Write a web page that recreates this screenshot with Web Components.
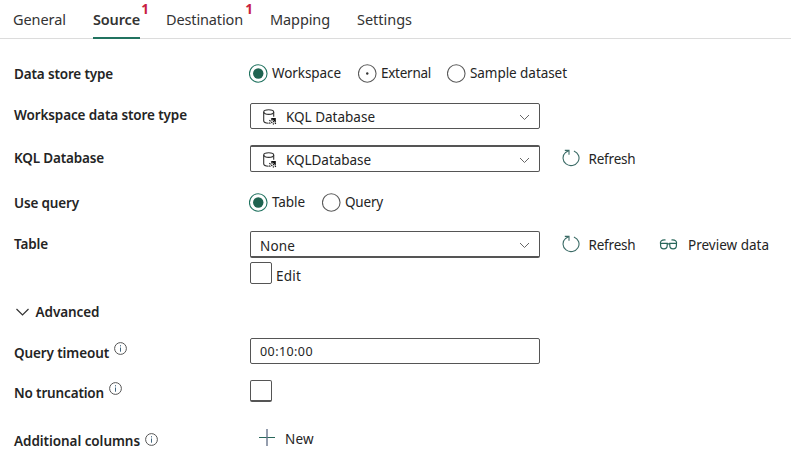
<!DOCTYPE html>
<html lang="en">
<head>
<meta charset="utf-8">
<title>Copy data – Source</title>
<style>
html,body{margin:0;background:#fff}
body{width:791px;height:456px;overflow:hidden;font:14px/20px "Noto Sans","Open Sans",sans-serif;color:#242424}
form-row.last{padding-top:6px;box-sizing:border-box}
.stack{display:grid;gap:4px}
.line{display:flex;align-items:center}
</style>
</head>
<body>
<tab-bar>
  <tab-item w="53" style="width:54px">General</tab-item>
  <tab-item w="47" selected badge="1" style="width:47px">Source</tab-item>
  <tab-item w="77" badge="1" style="width:78px">Destination</tab-item>
  <tab-item w="60" style="width:61px">Mapping</tab-item>
  <tab-item w="55" style="width:56px">Settings</tab-item>
</tab-bar>
<form-row h="42" label="Data store type" w="99" dy="1">
  <radio-option w="69" checked style="width:109px">Workspace</radio-option>
  <radio-option w="50" dot style="width:89px">External</radio-option>
  <radio-option w="97">Sample dataset</radio-option>
</form-row>
<form-row h="44" label="Workspace data store type" w="173" dy="-1">
  <select-box w="89" icon h="26">KQL Database</select-box>
</form-row>
<form-row h="41" label="KQL Database" w="90" dy="-1">
  <select-box w="85" icon h="27" thick="top">KQLDatabase</select-box>
  <action-button icon="refresh" w="47" style="margin-left:22px">Refresh</action-button>
</form-row>
<form-row h="46" label="Use query" w="65" dy="1">
  <radio-option w="33" checked style="width:73px">Table</radio-option>
  <radio-option w="38">Query</radio-option>
</form-row>
<form-row h="65" label="Table" w="34" dy="-14">
  <div class="stack">
    <div class="line">
      <select-box w="35" h="27" thick="bottom">None</select-box>
      <action-button icon="refresh" w="47" style="margin-left:22px">Refresh</action-button>
      <action-button icon="glasses" w="81" style="margin-left:23px">Preview data</action-button>
    </div>
    <check-box w="25">Edit</check-box>
  </div>
</form-row>
<section-toggle w="64">Advanced</section-toggle>
<form-row h="34" label="Query timeout" w="95" info dy="2"><text-field w="53">00:10:00</text-field></form-row>
<form-row h="46" label="No truncation" w="90" info dy="2"><check-box thick></check-box></form-row>
<form-row class="last" h="42" label="Additional columns" w="126" info="near" dy="3">
  <action-button icon="plus" w="29" style="margin-left:8px">New</action-button>
</form-row>

<script>
class Base extends HTMLElement {
  render(html) {
    if (!this.shadowRoot) this.attachShadow({mode:'open'}).innerHTML = html;
  }
  get w() { return this.getAttribute('w') || ''; }
  has(n) { return this.hasAttribute(n); }
}

/* A single line of text tracked to a given measure. */
customElements.define('fit-text', class extends Base {
  connectedCallback() {
    this.render('<style>:host{display:inline-block;white-space:pre}span{display:inline-block}</style><span><slot></slot></span>');
    const target = parseFloat(this.w), span = this.shadowRoot.querySelector('span');
    if (!target) return;
    this.style.width = target + 'px';
    const n = this.textContent.length;
    span.style.letterSpacing = ((target - span.getBoundingClientRect().width) / n).toFixed(3) + 'px';
  }
});

customElements.define('tab-bar', class extends Base {
  connectedCallback() {
    this.render('<style>:host{display:flex;gap:26px;box-sizing:border-box;height:39px;margin-bottom:13px;padding-left:13px;border-bottom:1px solid #dcdcdc}</style><slot></slot>');
  }
});

customElements.define('tab-item', class extends Base {
  connectedCallback() {
    const badge = this.getAttribute('badge');
    this.render(`<style>:host{display:block;position:relative;box-sizing:border-box;height:39px;padding-top:9px;color:#333;font-size:14.5px}
      :host([selected]){font-weight:600;border-bottom:2px solid #217360}
      sup{position:absolute;top:0;right:-9px;font:700 13.5px/18px "Noto Sans",sans-serif;color:#c8203f}</style>
      <fit-text w="${this.w}">${this.textContent}</fit-text>${badge ? `<sup>${badge}</sup>` : ''}`);
  }
});

customElements.define('info-icon', class extends Base {
  connectedCallback() {
    this.render(`<style>:host{display:block;height:13px}svg{display:block}</style>
      <svg width="13" height="13" viewBox="0 0 13 13" fill="none" stroke="#555"><circle cx="6.5" cy="6.5" r="5.9"/><path d="M6.5 5.5v4.2M6.5 3.2v1.2" stroke="#42667f"/></svg>`);
  }
});

customElements.define('form-row', class extends Base {
  connectedCallback() {
    const info = this.getAttribute('info');
    this.render(`<style>:host{display:grid;grid-template-columns:236px 1fr;align-items:center;padding-left:14px;height:${this.getAttribute('h')}px}
      label{display:flex;align-items:center;gap:5px;font-weight:600;font-size:13.5px;margin-top:${2*(this.getAttribute('dy')||0)}px}
      info-icon{margin-bottom:${info === 'near' ? 3 : 9}px}
      .control{display:flex;align-items:center}</style>
      <label><fit-text w="${this.w}">${this.getAttribute('label')}</fit-text>${info !== null ? '<info-icon></info-icon>' : ''}</label>
      <div class="control"><slot></slot></div>`);
  }
});

customElements.define('radio-option', class extends Base {
  connectedCallback() {
    const on = this.has('checked');
    this.render(`<style>:host{display:flex;align-items:center;gap:4px;font-size:13.5px}svg{display:block;margin-left:-1px}</style>
      <svg width="19" height="19" viewBox="0 0 19 19"><circle cx="9.25" cy="9.5" r="8.8" fill="none" stroke="${on ? '#217360' : '#5c5c5c'}" stroke-width="1.1"/>
      ${on ? '<circle cx="9.25" cy="9.5" r="5.2" fill="#1f6350"/>' : this.has('dot') ? '<circle cx="9.25" cy="9.5" r="1.2" fill="#333"/>' : ''}</svg>
      <fit-text w="${this.w}">${this.textContent}</fit-text>`);
  }
});

customElements.define('select-box', class extends Base {
  connectedCallback() {
    const t = this.getAttribute('thick');
    this.render(`<style>:host{display:flex;align-items:center;box-sizing:border-box;width:290px;height:${this.getAttribute('h')}px;border:1px solid #555;border-radius:2px;padding:0 9px;font-size:13.5px;${t ? `border-${t}-width:2px` : ''}}
      fit-text{margin-top:${t === 'bottom' ? 4 : 2}px}.db{margin:2px 9px 0 3px}.chev{margin-left:auto;margin-top:${t === 'bottom' ? 3 : 2}px}</style>
      ${this.has('icon') ? `<svg class="db" width="14" height="16" viewBox="0 0 14 16" fill="none" stroke="#333" stroke-width="1.1"><ellipse cx="5.7" cy="3.1" rx="5" ry="2.3"/><path d="M.7 3.1v9c0 1.2 2 2 4.9 2.1M10.7 3.1v4.6"/><path d="M7.6 8.9h5.2v4.6z" fill="#111" stroke="none"/><path d="M6.4 11.2l4.4 4.2M6.2 13.6l1.7 1.6M8.3 10.4l4.6 4.4" stroke="#111" stroke-width="1.1" stroke-dasharray="1.6 .8"/></svg>` : ''}
      <fit-text w="${this.w}">${this.textContent}</fit-text>
      <svg class="chev" width="11" height="7" viewBox="0 0 11 7" fill="none" stroke="#666"><path d="M1 1l4.5 4.5L10 1"/></svg>`);
  }
});

customElements.define('text-field', class extends Base {
  connectedCallback() {
    this.render(`<style>:host{display:flex;align-items:center;box-sizing:border-box;width:290px;height:26px;border:1px solid #555;border-radius:2px;padding:0 9px;font-size:12.5px}fit-text{margin-top:2px}</style>
      <fit-text w="${this.w}">${this.textContent}</fit-text>`);
  }
});

customElements.define('check-box', class extends Base {
  connectedCallback() {
    this.render(`<style>:host{display:flex;align-items:center;gap:4px;height:22px;font-size:13.5px}
      i{box-sizing:border-box;width:22px;height:22px;border:1px solid #555;border-radius:2px}
      :host([thick]) i{border-bottom-width:2px}fit-text{margin-top:5px}</style>
      <i></i>${this.w ? `<fit-text w="${this.w}">${this.textContent}</fit-text>` : ''}`);
  }
});

const ACTION_ICONS = {
  refresh: '<svg width="18" height="18" viewBox="0 0 18 18" fill="none" stroke="#3b6b66" stroke-width="1.1"><path d="M11.9 1.9A8 7.6 0 1 1 3.6 3.4L6.8 1.6M2.8 1.4h4.2v4.3"/></svg>',
  glasses: '<svg width="19" height="12" viewBox="0 0 19 12" fill="none" stroke="#28665a" stroke-width="1.2"><path d="M1.6 5.4h6.6v2.1a3.3 3.3 0 0 1-6.6 0zM10.8 5.4h6.6v2.1a3.3 3.3 0 0 1-6.6 0zM8.2 5.9h2.6M1.5 6C.9 3.4 2.5 1.6 6.6 2M17.5 6c.6-2.6-1-4.4-5.1-4"/></svg>',
  plus: '<svg width="18" height="18" viewBox="0 0 18 18" fill="none"><path d="M1 9.5h16" stroke="#28665a"/><path d="M9 1v17" stroke="#68758c" stroke-width="1.4"/></svg>'
};

customElements.define('action-button', class extends Base {
  connectedCallback() {
    const icon = this.getAttribute('icon');
    this.render(`<style>:host{display:flex;align-items:center;gap:${icon === 'glasses' ? 11 : 9}px;font-size:13.5px}svg{display:block;margin-top:${icon === 'glasses' ? -1 : -2}px}fit-text{margin-left:-.5px}:host([icon=plus]) fit-text{margin:2px 0 0}</style>
      ${ACTION_ICONS[icon]}<fit-text w="${this.w}">${this.textContent}</fit-text>`);
  }
});

customElements.define('section-toggle', class extends Base {
  connectedCallback() {
    this.render(`<style>:host{display:flex;align-items:center;gap:6.5px;height:44px;padding-left:15px;font-weight:600;font-size:13.5px}</style>
      <svg width="14" height="9" viewBox="0 0 14 9" fill="none" stroke="#333" stroke-width="1.2"><path d="M1.5 1l6 6 6-6"/></svg>
      <fit-text w="${this.w}">${this.textContent}</fit-text>`);
  }
});
</script>
</body>
</html>
